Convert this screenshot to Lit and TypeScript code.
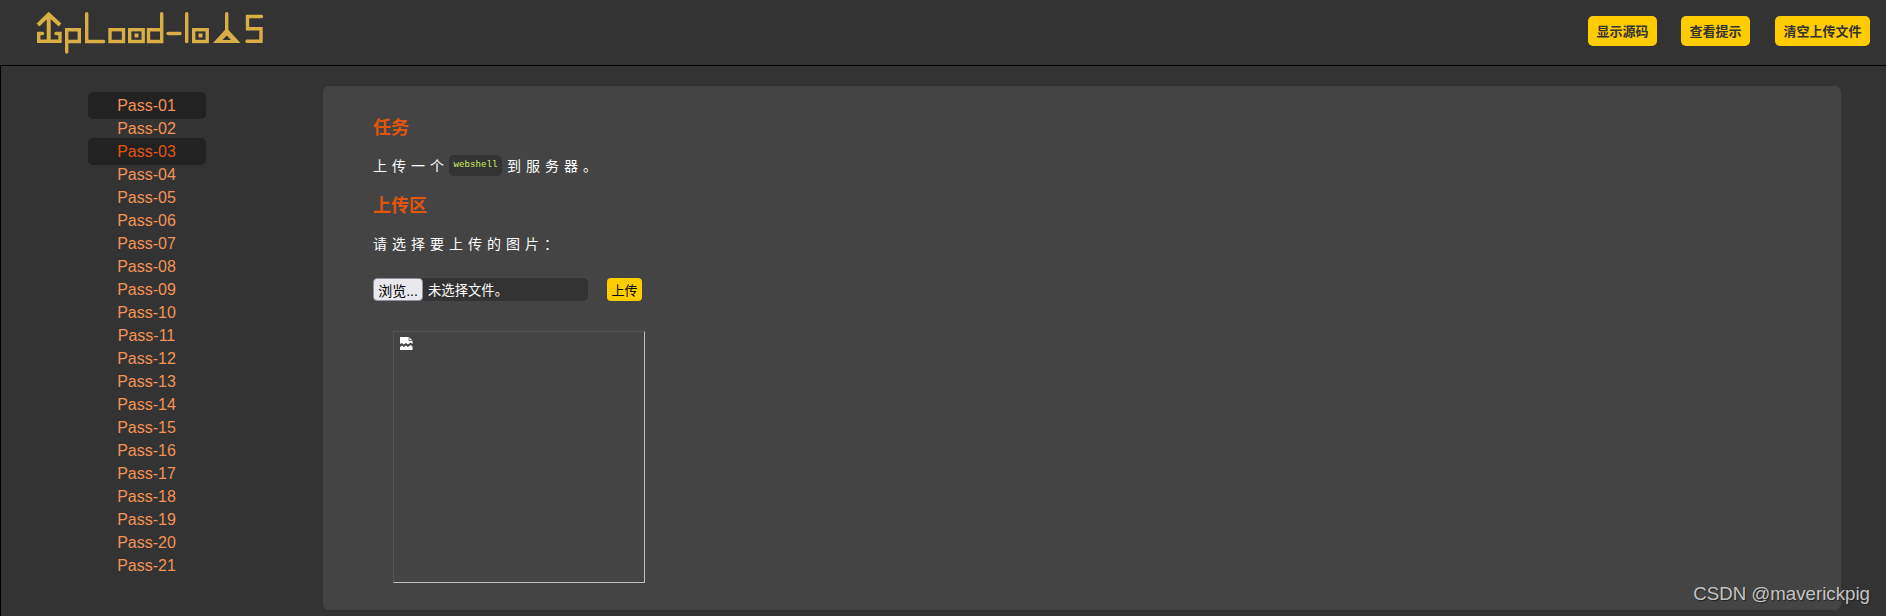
import { LitElement, html, css } from "lit";
import { customElement } from "lit/decorators.js";

const passes = Array.from({ length: 21 }, (_, i) => `Pass-${String(i + 1).padStart(2, "0")}`);

@customElement("app-root")
export class AppRoot extends LitElement {
  static styles = css`
    :host {
      display: block;
      position: relative;
      width: 1886px;
      height: 616px;
      overflow: hidden;
      background: #333;
      font-family: "Liberation Sans", "Noto Sans CJK SC", sans-serif;
      color: #fff;
    }

    header {
      display: flex;
      align-items: center;
      justify-content: space-between;
      box-sizing: border-box;
      height: 66px;
      padding: 0 16px 4px 0;
      border-bottom: 1px solid #000;
    }

    .logo {
      display: block;
      width: 300px;
      height: 65px;
      margin-top: 4px;
    }

    .logo * {
      fill: none;
      stroke: #d9ae45;
      stroke-width: 3.4;
      stroke-linecap: round;
    }

    .logo .arrow {
      stroke-width: 4;
      stroke-linecap: butt;
    }

    .logo .solid {
      fill: #d9ae45;
      stroke: none;
    }

    .logo .hole {
      fill: #333;
      stroke: none;
    }

    .actions {
      display: flex;
      gap: 24px;
    }

    button {
      font-family: inherit;
      border: none;
      cursor: pointer;
    }

    .actions button {
      height: 30px;
      padding: 0 8.5px;
      background: #fc0;
      color: #333;
      border-radius: 5px;
      font-size: 13px;
      font-weight: 700;
    }

    .actions button:last-child {
      margin-left: 1px;
    }

    .body {
      display: flex;
      height: 550px;
      border-left: 1px solid #000;
    }

    nav {
      display: flex;
      flex-direction: column;
      align-items: center;
      box-sizing: border-box;
      width: 291px;
      margin-right: 2px;
      padding-top: 28px;
      flex: none;
    }

    nav a {
      box-sizing: border-box;
      width: 118px;
      height: 23px;
      line-height: 23px;
      text-align: center;
      font-size: 16px;
      color: #f49355;
      border-radius: 5px;
    }

    nav a.hover,
    nav a.active {
      height: 27px;
      line-height: 27px;
      margin: -2px 0;
      background: #222;
    }

    nav a.active {
      color: #e2560b;
    }

    main {
      box-sizing: border-box;
      width: 1518px;
      height: 524px;
      margin: 20px 0 0 29px;
      padding: 30px 50px 0;
      background: #444;
      border-radius: 6px;
    }

    h2 {
      margin: 0;
      height: 24px;
      line-height: 24px;
      font-size: 18px;
      font-weight: 700;
      color: #e2560b;
    }

    p {
      display: flex;
      align-items: center;
      margin: 0;
      height: 22px;
      font-size: 14px;
      letter-spacing: 5px;
    }

    .task {
      margin: 14px 0 18px;
    }

    .prompt {
      margin: 14px 0 24px;
    }

    code {
      box-sizing: border-box;
      width: 53px;
      height: 21px;
      line-height: 21px;
      margin: 0 5px 0 0;
      text-align: center;
      background: #333;
      border-radius: 5px;
      font-family: "Liberation Mono", monospace;
      font-size: 9px;
      letter-spacing: 0.1px;
      color: #d2f060;
    }

    form {
      display: flex;
      align-items: center;
      gap: 19px;
    }

    .file {
      display: flex;
      align-items: center;
      width: 215px;
      height: 23px;
      background: #333;
      border-radius: 5px;
      font-size: 13.33px;
    }

    .file button {
      box-sizing: border-box;
      width: 50px;
      height: 23px;
      margin-right: 5px;
      padding: 0;
      background: #e9e9ed;
      color: #000;
      border: 1px solid #8f8f9d;
      border-radius: 4px;
      font-size: 14px;
    }

    .submit {
      width: 35px;
      height: 23px;
      padding: 0;
      background: #fc0;
      color: #000;
      border-radius: 4px;
      font-size: 13px;
    }

    .preview {
      box-sizing: border-box;
      width: 252px;
      height: 252px;
      margin: 30px 0 0 20px;
      padding: 5px 6px;
      border: 1px solid;
      border-color: #555 #c0c0c0 #c0c0c0 #555;
    }

    .preview svg {
      display: block;
    }

    .watermark {
      position: absolute;
      right: 16px;
      bottom: 11px;
      font-size: 18.7px;
      color: #c4c4c4;
      text-shadow: 1px 1px 1px #222;
    }
  `;

  render() {
    return html`
      <header>
        <svg class="logo" viewBox="0 0 300 65" role="img" aria-label="upload-labs">
          <path class="arrow" d="M38 25 48.7 14.5 60 25M48.7 14V41" />
          <path d="M42.5 33.5H38.7V41.3H60V33.5H56" />
          <path d="M66.7 52V29.7H79.3V41.5H66.7" />
          <path d="M86.7 13.7V41.5H103.7" />
          <rect x="110" y="29.7" width="13.5" height="11.8" />
          <rect x="129.7" y="29.7" width="13.5" height="11.8" />
          <rect class="solid" x="134.5" y="33.5" width="4" height="4" />
          <path d="M161.7 13.7V41.5H148.5V29.7H161.7" />
          <path d="M168 33.5H180" />
          <path d="M186.7 13.7V41.5" />
          <rect x="193.7" y="29.7" width="13.5" height="11.8" />
          <rect class="solid" x="198.5" y="33.5" width="4" height="4" />
          <path d="M226.7 13.7V31" />
          <path class="solid" d="M226.7 28 240.5 43H213Z" />
          <path class="hole" d="M226.7 35.5 231 40H222.4Z" />
          <path d="M261.5 16.5H247.5V28.7H261V41.3H247" />
        </svg>
        <div class="actions">
          <button>显示源码</button>
          <button>查看提示</button>
          <button>清空上传文件</button>
        </div>
      </header>
      <div class="body">
        <nav>
          ${passes.map(
            (name, i) =>
              html`<a class=${i === 0 ? "hover" : i === 2 ? "active" : ""}>${name}</a>`
          )}
        </nav>
        <main>
          <h2>任务</h2>
          <p class="task">上传一个<code>webshell</code>到服务器。</p>
          <h2>上传区</h2>
          <p class="prompt">请选择要上传的图片：</p>
          <form>
            <div class="file"><button type="button">浏览...</button>未选择文件。</div>
            <button class="submit" type="button">上传</button>
          </form>
          <div class="preview">
            <svg width="13" height="13" viewBox="0 0 13 13">
              <path fill="#fff" d="M0 0H9L12.5 3.5V7L10.5 5.5 8 7.5 6 6 3.5 7.5 2 6 0 7ZM0 13V10L2 8.5 3.5 10 6 8.5 8 10 10.5 8 12.5 9.5V13Z" />
              <path fill="none" stroke="#444" stroke-width="0.8" d="M9 0V3.5H12.5" />
            </svg>
          </div>
        </main>
      </div>
      <div class="watermark">CSDN @maverickpig</div>
    `;
  }
}
